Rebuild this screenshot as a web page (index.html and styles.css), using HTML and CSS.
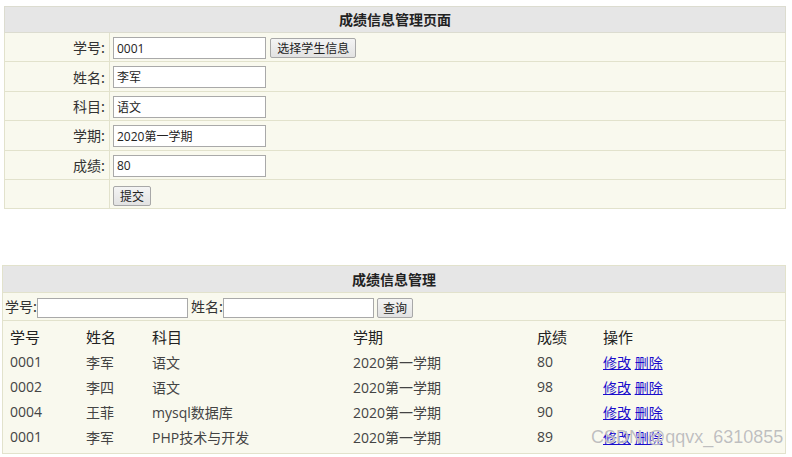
FILE: index.html
```html
<!DOCTYPE html>
<html lang="zh">
<head>
<meta charset="utf-8">
<title>成绩信息管理</title>
<link rel="stylesheet" href="styles.css">
</head>
<body>
<div class="page">
  <table class="form-table">
    <tr><th colspan="2" class="title">成绩信息管理页面</th></tr>
    <tr><td class="label">学号:</td><td class="field"><input class="txt" value="0001"> <button class="btn">选择学生信息</button></td></tr>
    <tr><td class="label">姓名:</td><td class="field"><input class="txt" value="李军"></td></tr>
    <tr><td class="label">科目:</td><td class="field"><input class="txt" value="语文"></td></tr>
    <tr><td class="label">学期:</td><td class="field"><input class="txt" value="2020第一学期"></td></tr>
    <tr><td class="label">成绩:</td><td class="field"><input class="txt" value="80"></td></tr>
    <tr><td class="label"></td><td class="field"><button class="btn">提交</button></td></tr>
  </table>

  <table class="list-table">
    <tr><th class="title">成绩信息管理</th></tr>
    <tr><td class="search">学号:<input class="txt stxt"> 姓名:<input class="txt stxt"> <button class="btn qbtn">查询</button></td></tr>
    <tr><td class="list-cell">
      <table class="data">
        <tr class="head"><td class="c1">学号</td><td class="c2">姓名</td><td class="c3">科目</td><td class="c4">学期</td><td class="c5">成绩</td><td class="c6">操作</td></tr>
        <tr><td>0001</td><td>李军</td><td>语文</td><td>2020第一学期</td><td>80</td><td><a href="#">修改</a> <a href="#">删除</a></td></tr>
        <tr><td>0002</td><td>李四</td><td>语文</td><td>2020第一学期</td><td>98</td><td><a href="#">修改</a> <a href="#">删除</a></td></tr>
        <tr><td>0004</td><td>王菲</td><td>mysql数据库</td><td>2020第一学期</td><td>90</td><td><a href="#">修改</a> <a href="#">删除</a></td></tr>
        <tr><td>0001</td><td>李军</td><td>PHP技术与开发</td><td>2020第一学期</td><td>89</td><td><a href="#">修改</a> <a href="#">删除</a></td></tr>
      </table>
    </td></tr>
  </table>
  <div class="watermark">CSDN @qqvx_6310855</div>
</div>
</body>
</html>
```

FILE: styles.css
```css
html, body {
  margin: 0;
  padding: 0;
  background: #ffffff;
}
body {
  font-family: "Open Sans", "Noto Sans CJK SC", sans-serif;
  color: #333;
}
.page {
  position: relative;
  width: 792px;
  height: 457px;
  padding-top: 6px;
  box-sizing: border-box;
}
table {
  border-collapse: collapse;
}
.form-table {
  margin-left: 4px;
  width: 782px;
  background: #f9f9ee;
  border: 1px solid #e2e2cc;
}
.form-table td, .form-table th {
  border: 1px solid #e2e2cc;
  padding: 0;
}
.title {
  background: #e6e6e6;
  height: 25px;
  font-family: "Noto Sans CJK SC", sans-serif;
  font-size: 14px;
  font-weight: bold;
  color: #222;
  text-align: center;
  padding: 0;
  line-height: 25px;
}
.form-table .title {
  border-color: #dcdcd0;
}
.label {
  width: 100px;
  text-align: right;
  padding-right: 4px !important;
  font-family: "Noto Sans CJK SC", sans-serif;
  font-size: 14px;
  color: #333;
  height: 28.4px;
}
.field {
  padding-left: 3px !important;
}
.txt {
  box-sizing: border-box;
  width: 153px;
  height: 22px;
  border: 1px solid #a9a9a9;
  background: #fff;
  font-family: "Open Sans", "Noto Sans CJK SC", sans-serif;
  font-size: 12px;
  color: #222;
  padding: 0 3px;
  margin: 0;
  vertical-align: middle;
}
.btn {
  box-sizing: border-box;
  height: 20px;
  padding: 0 6px;
  border: 1px solid #a8a8a8;
  border-radius: 2px;
  background: linear-gradient(#f4f4f4, #e2e2e2);
  font-family: "Noto Sans CJK SC", sans-serif;
  font-size: 12px;
  color: #222;
  line-height: 16px;
  vertical-align: middle;
  margin: 0;
}
.list-table {
  margin-top: 56px;
  margin-left: 2px;
  width: 784px;
  background: #f9f9ee;
  border: 1px solid #e2e2cc;
}
.list-table > tbody > tr > td, .list-table > tbody > tr > th {
  border: 1px solid #e2e2cc;
}
.list-table .title {
  height: 26px;
  line-height: 26px;
}
.search {
  height: 27px;
  padding: 0 0 0 2px;
  font-family: "Noto Sans CJK SC", sans-serif;
  font-size: 14px;
  color: #333;
  white-space: nowrap;
}
.stxt {
  width: 151px;
  height: 20px;
}
.qbtn {
  padding: 0 5px;
}
.list-cell {
  padding: 3px 0 4px 0;
}
.data {
  width: 100%;
}
.data td {
  height: 25px;
  padding: 0;
  font-size: 14px;
  color: #444;
  white-space: nowrap;
}
.data .head td {
  font-family: "Noto Sans CJK SC", sans-serif;
  font-size: 15px;
  color: #222;
}
.c1 { width: 76px; }
.c2 { width: 66px; }
.c3 { width: 201px; }
.c4 { width: 184px; }
.c5 { width: 66px; }
.data tr td:first-child { padding-left: 7px; }
.data a {
  color: #1a0dcc;
  text-decoration: underline;
  font-family: "Noto Sans CJK SC", sans-serif;
  font-size: 14px;
}
.watermark {
  position: absolute;
  left: 591px;
  top: 427px;
  font-family: "Liberation Sans", sans-serif;
  font-size: 18px;
  color: rgba(170, 170, 170, 0.75);
  text-shadow: 0 0 1px #fff;
  pointer-events: none;
}
```
